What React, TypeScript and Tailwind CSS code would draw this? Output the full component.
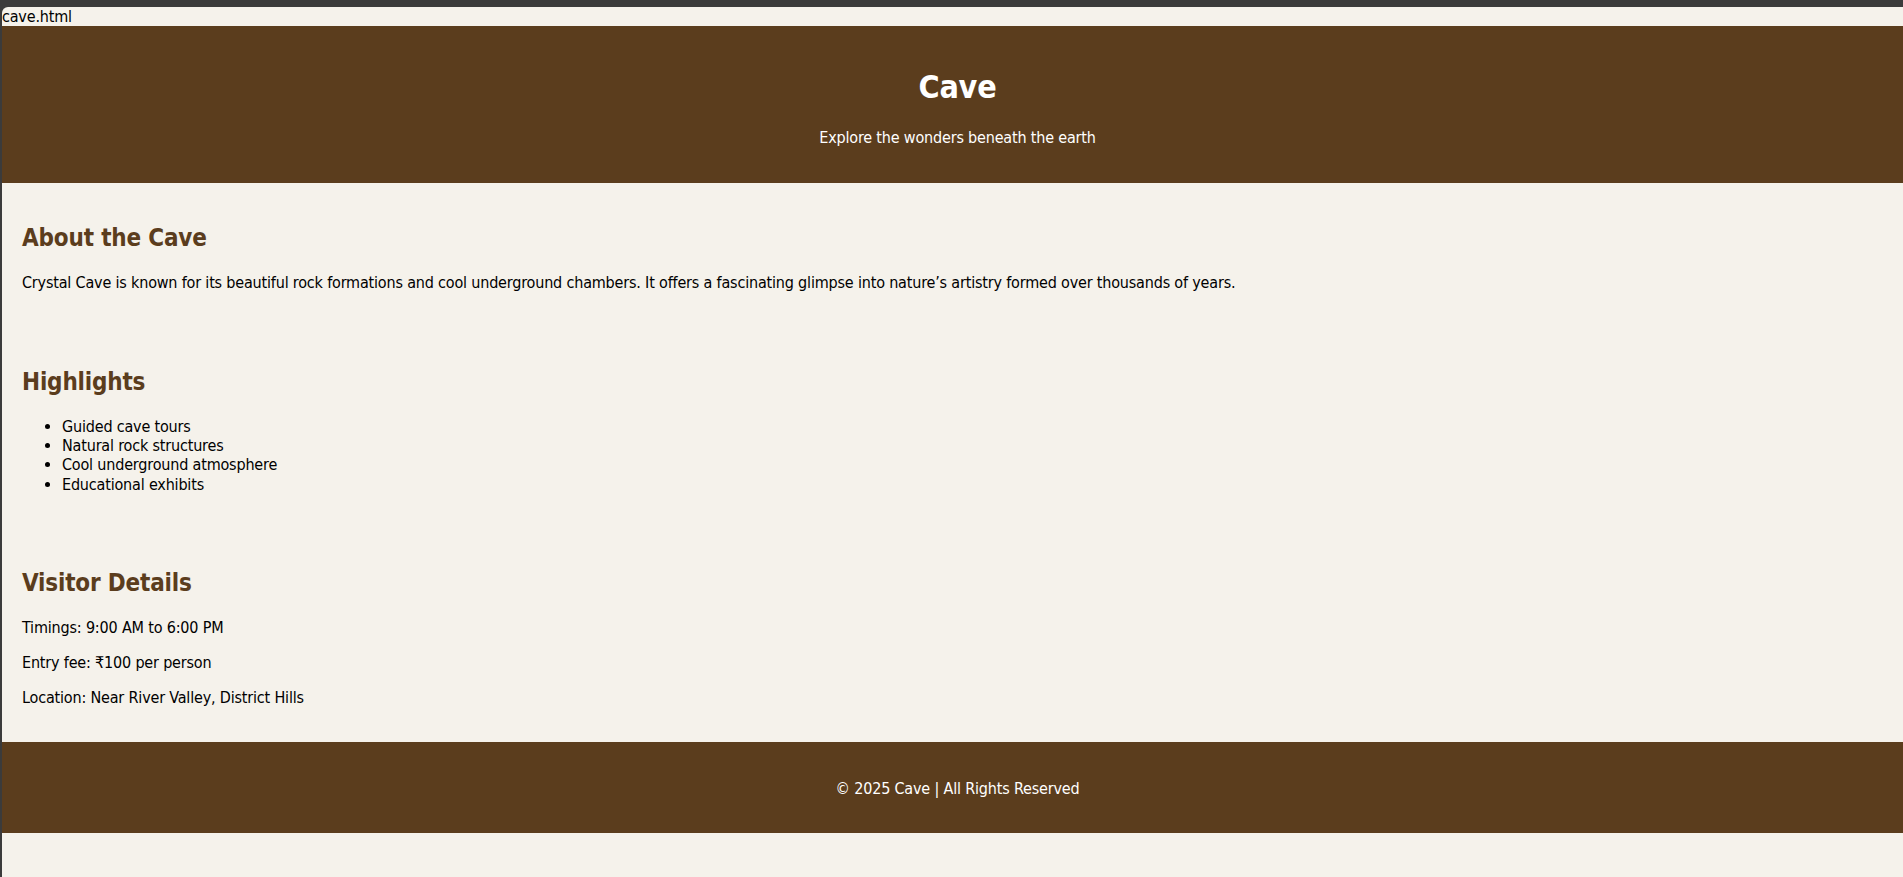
import React from "react";

const font = "font-['DejaVu_Sans_Condensed','DejaVu_Sans',sans-serif] tracking-[-0.18px]";

export default function App() {
  return (
    <div className="min-h-screen overflow-hidden bg-[#3b3b3b] pt-[7px] pl-[2px]">
      <div className={`${font} min-h-[870px] w-[1911px] rounded-tl-[6px] bg-[#f5f2eb] text-[16px] leading-[19.3px] text-black`}>
        <div className="h-[19px] leading-[19px]">cave.html</div>

        <header className="bg-[#5b3d1d] pt-[21px] pb-[19px] text-center text-white">
          <h1 className="my-[21.44px] text-[32px] font-bold leading-[38.6px]">Cave</h1>
          <p className="my-4">Explore the wonders beneath the earth</p>
        </header>

        <main>
          <section className="pt-[21px] pb-[19px] px-[20px]">
            <h2 className="my-[19.92px] text-[24px] font-bold leading-[29px] text-[#5b3d1d]">About the Cave</h2>
            <p className="my-4">
              Crystal Cave is known for its beautiful rock formations and cool underground chambers. It offers a fascinating glimpse into nature’s artistry formed over thousands of years.
            </p>
          </section>

          <section className="pt-[21px] pb-[19px] px-[20px]">
            <h2 className="my-[19.92px] text-[24px] font-bold leading-[29px] text-[#5b3d1d]">Highlights</h2>
            <ul className="my-4 list-disc pl-[40px]">
              <li>Guided cave tours</li>
              <li>Natural rock structures</li>
              <li>Cool underground atmosphere</li>
              <li>Educational exhibits</li>
            </ul>
          </section>

          <section className="pt-[20px] pb-[18px] px-[20px]">
            <h2 className="my-[19.92px] text-[24px] font-bold leading-[29px] text-[#5b3d1d]">Visitor Details</h2>
            <p className="my-4">Timings: 9:00 AM to 6:00 PM</p>
            <p className="my-4">Entry fee: ₹100 per person</p>
            <p className="my-4">Location: Near River Valley, District Hills</p>
          </section>
        </main>

        <footer className="bg-[#5b3d1d] pt-[21px] pb-[19px] text-center text-white">
          <p className="my-4">© 2025 Cave | All Rights Reserved</p>
        </footer>
      </div>
    </div>
  );
}
